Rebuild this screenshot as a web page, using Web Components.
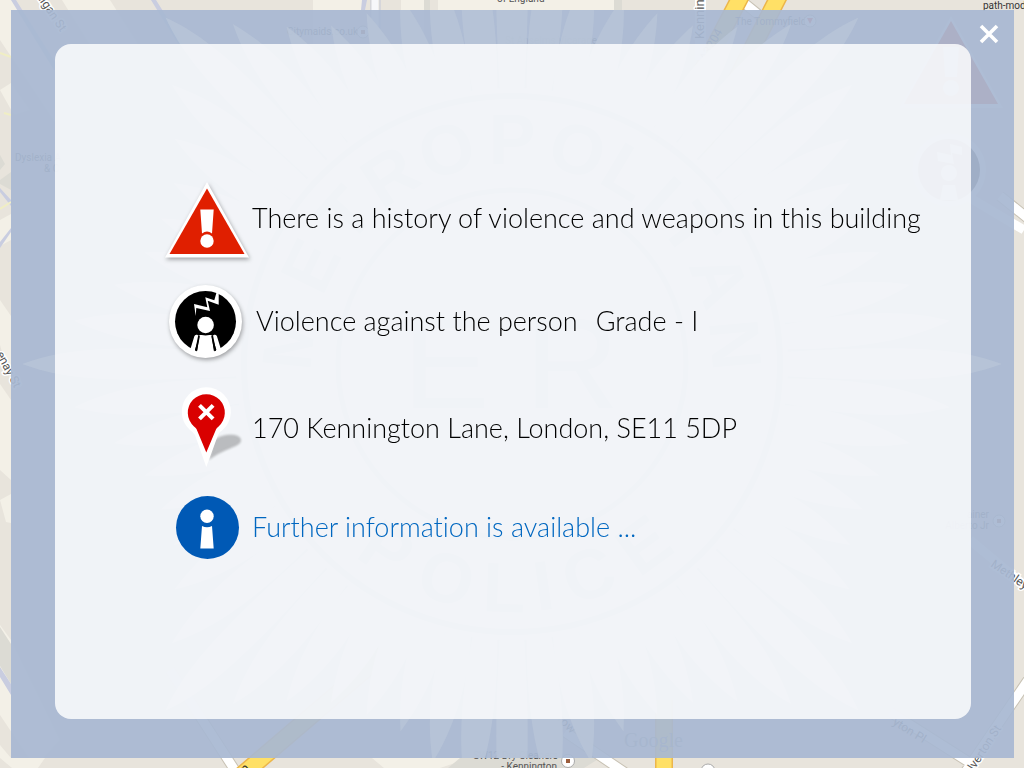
<!DOCTYPE html>
<html lang="en">
<head>
<meta charset="utf-8">
<meta name="viewport" content="width=device-width, initial-scale=1">
<title>Location alert</title>
<style>
  html, body { margin: 0; min-height: 100%; }
  body { font-family: Lato, "Open Sans", sans-serif; background: #e8e4dc; }
</style>
</head>
<body>
<alert-screen>
  <street-map slot="map"></street-map>
  <alert-panel>
    <alert-row icon="warning">There is a history of violence and weapons in this building</alert-row>
    <alert-row icon="person" indented><span>Violence against the person</span><span>Grade - I</span></alert-row>
    <alert-row icon="pin">170 Kennington Lane, London, SE11 5DP</alert-row>
    <alert-row icon="info" href="#further">Further information is available ...</alert-row>
  </alert-panel>
</alert-screen>

<script>
const define = (name, markup, setup) => {
  const template = document.createElement('template');
  template.innerHTML = markup;
  customElements.define(name, class extends HTMLElement {
    constructor() {
      super();
      this.attachShadow({ mode: 'open' }).append(template.content.cloneNode(true));
    }
    connectedCallback() { if (setup) setup(this, this.shadowRoot); }
  });
};

const ICONS = {
  warning: `<svg width="84" height="76" viewBox="0 0 84 76" aria-hidden="true">
    <path class="lift" d="M42 0 84 75.500H0Z" fill="#fff"/>
    <path d="M42 6.500 79.500 72H4.500Z" fill="#e01f00"/>
    <path d="M35.300 27.500H48.700L47 51.500Q42 47.500 37 51.500Z" fill="#fff"/>
    <circle cx="42" cy="59" r="6.700" fill="#fff"/></svg>`,
  person: `<svg width="84" height="76" viewBox="0 0 84 76" aria-hidden="true">
    <circle class="lift" cx="40.500" cy="36.500" r="36.500" fill="#fff"/>
    <circle cx="40.500" cy="36.500" r="30.500"/>
    <path d="M29 19 42.300 22.300 40.300 12.300 49.300 15.300 52 5.700 53.700 6.700V19.700L42.700 15.700 45 26 31.300 23 30.700 31Z" fill="#fff"/>
    <path d="M32.500 20.500 44 23.500 42 14 51.500 17.500 53 8" fill="none"/>
    <path d="M31.500 52 27.500 65M49.800 52 53.800 65" stroke="#fff" stroke-width="4.500" stroke-linecap="round"/>
    <path d="M34.500 50H46.500L49 67H32Z" fill="#fff"/>
    <path d="M34 51 31 66M47.200 51 50.200 66" stroke="#000" stroke-width="1.800"/>
    <circle cx="40.600" cy="40" r="10.500"/><circle cx="40.600" cy="40" r="8.300" fill="#fff"/></svg>`,
  pin: `<svg width="84" height="80" viewBox="0 0 84 80" aria-hidden="true">
    <path d="M44 72 49 52C58 45 77 45 76 53C75 59 60 60 44 72Z" fill="#000" opacity=".23" style="filter:blur(1px)"/>
    <path d="M41.300 79 30 47Q28 44 25 42A24.500 24.500 0 1 1 57.600 42Q54 44 53 47Z" fill="#fff"/>
    <path d="M41.300 64.500 31.500 41Q30.700 39.500 29 38.500A18.500 18.500 0 1 1 53.600 38.500Q52 39.500 51.200 41Z" fill="#d90000"/>
    <path d="M34.500 17.300 48.100 30.900M48.100 17.300 34.500 30.900" stroke="#fff" stroke-width="4"/></svg>`,
  info: `<svg width="84" height="64" viewBox="0 0 84 64" aria-hidden="true">
    <circle cx="42.500" cy="32.500" r="31.500" fill="#0059b5"/>
    <circle cx="42" cy="21.300" r="6.700" fill="#fff"/>
    <path d="M37 31Q42 33.500 47 31L48.700 53.500H35.300Z" fill="#fff"/></svg>`
};

define('alert-row', `
<style>
  :host { display: block; }
  .row { display: flex; align-items: center; gap: 3px; color: #000; text-decoration: none; }
  a.row { color: #0067c0; }
  .icon { flex: none; display: flex; }
  svg { display: block; overflow: visible; }
  .lift { filter: drop-shadow(1px 2px 2px rgba(0,0,0,.35)); }
  .label { display: flex; flex-wrap: wrap; column-gap: 18px; font-size: 27px; line-height: 36px; font-weight: 300; font-variant-ligatures: none; padding-bottom: 4px; }
  :host([icon="pin"]) .label, :host([icon="info"]) .label { padding-bottom: 0; }
  :host([indented]) .label { padding-left: 4px; }
</style>`, (host, root) => {
  if (root.querySelector('.row')) return;
  const row = document.createElement(host.hasAttribute('href') ? 'a' : 'div');
  row.className = 'row';
  if (host.hasAttribute('href')) row.href = host.getAttribute('href');
  row.innerHTML = `<span class="icon">${ICONS[host.getAttribute('icon')]}</span><span class="label"><slot></slot></span>`;
  root.append(row);
});

define('alert-panel', `
<style>
  :host { display: flex; flex-direction: column; gap: 27px; box-sizing: border-box; flex: 1; will-change: transform;
    padding: 138px 40px 138px 110px; border-radius: 16px; background: rgba(255,255,255,.82); }
</style><slot></slot>`);

define('close-button', `
<style>
  :host { display: block; }
  button { display: block; padding: 8px; border: 0; background: none; cursor: pointer; }
  svg { display: block; }
</style>
<button type="button" aria-label="Close"><svg width="20" height="20" viewBox="0 0 20 20"><path d="M2 2 18 18M18 2 2 18" stroke="#fff" stroke-width="3.600"/></svg></button>`);

/* Police star: tapering rays around a lettered ring, tinted over the frame. */
define('star-crest', `
<style>
  :host { display: block; }
  svg { display: block; width: 100%; height: 100%; }
  text { font: bold 70px "Liberation Sans", sans-serif; fill: #adbad2; text-anchor: middle; }
  .centre { font-size: 130px; font-weight: normal; }
</style>
<svg viewBox="0 0 1003 748" preserveAspectRatio="xMidYMid slice" aria-hidden="true">
  <g transform="translate(501 354)">
    <g class="rays" fill="#b8c5d8"></g>
    <circle r="276" fill="#b8c5d8"/>
    <g fill="none" stroke="#adbad2"><circle r="268" stroke-width="6"/><circle r="174" stroke-width="5"/></g>
    <g class="letters"></g>
    <text class="centre" x="-66" y="44">E</text>
    <text class="centre" x="60" y="44">R</text>
  </g>
</svg>`, (host, root) => {
  const tips = [490, 440, 406, 384, 380, 384, 406, 440];
  root.querySelector('.rays').innerHTML = Array.from({ length: 64 }, (_, i) => {
    const tip = tips[i % 8];
    return `<path transform="rotate(${i * 5.625})" d="M270 -12C${tip - 90} -20 ${tip - 40} -15 ${tip} 0C${tip - 40} 15 ${tip - 90} 20 270 12Z"/>`;
  }).join('');
  const upper = [-84, -64, -48, -33, -17, 0, 17, 31, 42, 53, 68, 85];
  const lower = [34, 17, 2, -8, -20, -36];
  root.querySelector('.letters').innerHTML =
    [...'METROPOLITAN'].map((c, i) => `<text transform="rotate(${upper[i]})" y="-200">${c}</text>`).join('') +
    [...'POLICE'].map((c, i) => `<text transform="rotate(${lower[i]})" y="248">${c}</text>`).join('');
});

define('street-map', `
<style>
  :host { display: block; overflow: hidden; }
  svg { display: block; width: 100%; height: 100%; }
  text { font-family: Roboto, sans-serif; font-size: 10px; fill: #555; }
  .halo { stroke: #fff; stroke-width: 3px; paint-order: stroke; }
</style>
<svg viewBox="0 0 1024 768" preserveAspectRatio="xMidYMid slice" aria-hidden="true">
  <rect width="1024" height="768" fill="#e8e4dc"/>
  <g fill="#f3f0e7">
    <path d="M0 0H12L60 70V130L0 40ZM62 0H110L180 110H130ZM313 0H362V10H340V60H313ZM0 90 11 83 30 110 14 115ZM0 300 11 316V384L0 345ZM0 220 11 214V240L0 246ZM0 384 11 400V480L0 470ZM0 500 11 494V523L6 522ZM0 625 11 640 60 740 35 767 0 715ZM384 768 372 758H470L440 768ZM401 0H424V60H401ZM438 0H615V40H438Z"/>
    <path d="M0 745 11 758H45L38 768H12L0 758Z"/>
  </g>
  <g fill="#dcdbd4"><path d="M0 180 11 172V190L0 184ZM0 155 5 164 0 170ZM0 627 11 644V684L0 666ZM424 0H430V10H424ZM614 0H622V10H614ZM460 758H600L584 768H448Z"/></g>
  <g fill="#c9cde0"><path d="M11 0H16L60 70H54ZM151 0H156L200 70H194ZM362 0H367L365 10H361ZM0 188 11 200V206L0 192ZM0 242 11 228V232L0 248ZM0 667 11 684V695L0 677Z"/></g>
  <path d="M0 53 11 57M4 113 11 115M0 209 11 202" stroke="#f0eec4" stroke-width="2"/>
  <g fill="none" stroke="#c8c2b4" stroke-width="11">
    <path d="M733 -6 765 20M565 732 630 776M1000 196 1040 228M1028 680 960 780M890 712 975 766M170 670 236 772"/>
  </g>
  <path d="M371 0V60M380 0V60" stroke="#c4c8d8"/>
  <g fill="none" stroke="#fff" stroke-width="9">
    <path d="M733 -6 765 20M565 732 630 776M1000 196 1040 228M1028 680 960 780M890 712 975 766M170 670 236 772M940 180 1024 230M970 540 1024 585"/>
  </g>
  <path d="M375 0V60" stroke="#f7f7fa" stroke-width="7"/>
  <g fill="none" stroke="#ecb64b" stroke-width="18">
    <path d="M744 -10 640 190M782 -10 700 150M664 700V780M236 780 400 640"/>
  </g>
  <g fill="none" stroke="#ffe066" stroke-width="15">
    <path d="M744 -10 640 190M782 -10 700 150M664 700V780M236 780 400 640"/>
  </g>
  <path d="M695 0H706V60H695Z" fill="#fff"/>
  <text class="halo" transform="translate(36 -4) rotate(56)" style="font-size:12px">digan St</text>
  <text class="halo" transform="translate(-4 354) rotate(62)" style="font-size:12px">enay St</text>
  <text x="287" y="35">Citymaids.co.uk</text>
  <text x="15" y="161">Dyslexia A</text>
  <text x="44" y="172">&amp; C</text>
  <text x="497" y="2">of England</text>
  <text x="505" y="44">St Anselms Vicarage</text>
  <text x="735" y="25">The Tommyfield</text>
  <text class="halo" transform="translate(704 39) rotate(-90)" style="font-size:13px">Kennin</text>
  <text transform="translate(706 62) rotate(-61)" style="font-size:12px">A3204</text>
  <text x="983" y="9" style="fill:#333">path-mod</text>
  <text x="558" y="759" text-anchor="end">SW12 Dry Cleaners</text>
  <text x="557" y="770" text-anchor="end">- Kennington</text>
  <text x="989" y="518" text-anchor="end">ainer</text>
  <text x="989" y="529" text-anchor="end">Alberto Jr</text>
  <text x="624" y="747" style="font:20px 'Liberation Serif',serif;fill:#999">Google</text>
  <text transform="translate(990 566) rotate(34)" class="halo" style="font-size:12px">Methley</text>
  <text transform="translate(974 771) rotate(-57)" class="halo" style="font-size:12px">lverton St</text>
  <text transform="translate(892 724) rotate(32)" style="font-size:12px">yton Pl</text>
  <text transform="translate(557 720) rotate(45)" style="font-size:12px">row</text>
  <text transform="translate(245 774) rotate(-42)" style="font-size:13px;fill:#333">n</text>
  <g fill="#fff" stroke="#aaa"><circle cx="568" cy="761" r="6.500"/><circle cx="708" cy="771" r="7"/><circle cx="363" cy="32" r="6"/><circle cx="999" cy="521" r="6"/><circle cx="810" cy="21" r="6"/></g>
  <g fill="#9b5d3c"><path d="M566 759H570V763H566ZM361 30H365V34H361ZM997 519H1001V523H997Z"/><path d="M807 18H813L810 24Z" fill="#d33"/></g>
  <g opacity=".8">
    <path d="M951 16 1003 108H899Z" fill="#fff"/>
    <path d="M951 21 998 104H904Z" fill="#e01f00"/>
    <path d="M943 47H959L957 77H945ZM951 80A8 8 0 1 1 950.900 80" fill="#fff"/>
    <circle cx="949" cy="170" r="37" fill="#fff"/><circle cx="949" cy="170" r="31"/>
    <path d="M937 152 951 155 950 144 962 147V155L952 153 954 164 938 161ZM949 165A8 8 0 1 1 948.900 165M943 185H955L958 200H940Z" fill="#fff"/>
  </g>
</svg>`);

define('alert-screen', `
<style>
  :host { position: relative; display: flex; box-sizing: border-box; min-height: 100vh; padding: 10px 10px 10px 11px; overflow: hidden; }
  ::slotted([slot="map"]), star-crest { position: absolute; inset: 0; }
  .frame { position: relative; flex: 1; display: flex; box-sizing: border-box; padding: 34px 43px 39px 44px; background: rgba(168,184,210,.93); }
  star-crest { opacity: .85; }
  .panel { position: relative; display: flex; flex: 1; }
  close-button { position: absolute; top: 6px; right: 7px; }
</style>
<slot name="map"></slot>
<main class="frame">
  <star-crest></star-crest>
  <div class="panel"><slot></slot></div>
  <close-button></close-button>
</main>`);
</script>
</body>
</html>
